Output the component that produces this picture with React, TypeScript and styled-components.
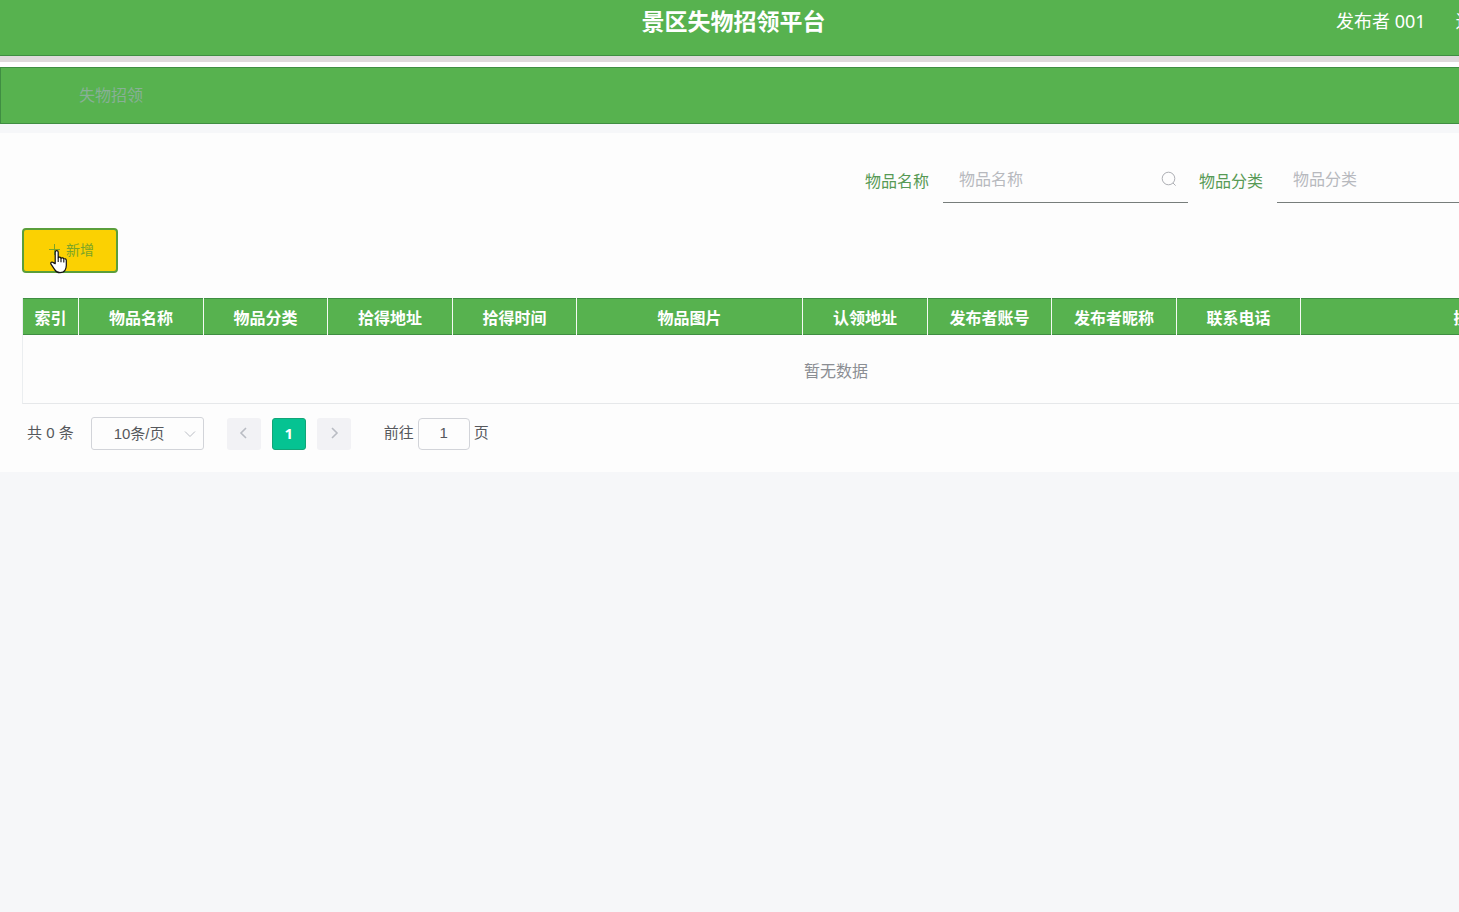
import React from "react";
import styled, { createGlobalStyle } from "styled-components";

const GREEN = "#57b24f";
const GREEN_EDGE = "#3f8e42";

const GlobalStyle = createGlobalStyle`
  *, *::before, *::after { box-sizing: border-box; }
  body {
    margin: 0;
    min-height: 100vh;
    background: #f6f7f9;
    font-family: "Noto Sans", "Noto Sans CJK SC", sans-serif;
    overflow-x: hidden;
  }
  button, input, select { font: inherit; margin: 0; }
`;

/* The page is wider than the window; the part to the right is cut off. */
const Viewport = styled.div`
  overflow: hidden;
`;

const Page = styled.div`
  width: calc(100% + 212px);
`;

const Header = styled.header`
  display: grid;
  grid-template-columns: 1fr auto 1fr;
  align-items: center;
  height: 62px;
  padding: 0 204px 14px 0;
  background: ${GREEN};
  border-bottom: 6px solid #dfdadc;
  box-shadow: inset 0 -1px 0 ${GREEN_EDGE};
  color: #fff;
`;

const Title = styled.h1`
  grid-column: 2;
  margin: 0;
  font-size: 23px;
  line-height: 42px;
  font-weight: 700;
`;

const UserBar = styled.div`
  display: flex;
  justify-content: flex-start;
  gap: 30px;
  width: 131px;
  justify-self: end;
  white-space: nowrap;
  font-size: 18px;
  line-height: 42px;
`;

const PlainLink = styled.a`
  color: inherit;
  text-decoration: none;
`;

const NavBar = styled.nav`
  display: flex;
  align-items: center;
  height: 57px;
  margin-top: 5px;
  padding: 0 0 3px 78px;
  background: ${GREEN};
  border: 1px solid ${GREEN_EDGE};
  font-size: 16px;
  color: #88b096;
`;

const Top = styled.div`
  background: #fff;
`;

const Panel = styled.main`
  margin-top: 9px;
  padding: 24px 22px 22px;
  background: #fdfdfd;
`;

const SearchForm = styled.form`
  display: flex;
  justify-content: flex-end;
  gap: 11px;
  padding-right: 127px;
`;

const Field = styled.div`
  display: flex;
  gap: 14px;
`;

const FieldLabel = styled.label`
  height: 46px;
  font-size: 16px;
  line-height: 48px;
  color: #579a55;
`;

const InputWrap = styled.div`
  display: flex;
  align-items: center;
  width: 245px;
  height: 46px;
  padding: 0 11px 2px 16px;
  border-bottom: 1px solid #777d7b;
`;

const TextInput = styled.input`
  flex: 1;
  min-width: 0;
  padding: 0;
  border: 0;
  outline: 0;
  background: transparent;
  font-size: 16px;
  line-height: 24px;
  color: #606266;
  &::placeholder { color: #b7b9be; opacity: 1; }
`;

const Actions = styled.div`
  display: flex;
  position: relative;
  margin: 25px 0;
`;

const AddButton = styled.button`
  display: flex;
  align-items: center;
  justify-content: center;
  gap: 6px;
  width: 96px;
  height: 45px;
  padding: 0 0 4px 2px;
  border: 2px solid #5a9e3a;
  border-radius: 4px;
  background: #fbd102;
  font-size: 14px;
  color: #7ba427;
  cursor: pointer;
`;

const Pointer = styled.svg`
  position: absolute;
  left: 27px;
  top: 21px;
`;

const DataTable = styled.table`
  width: 100%;
  table-layout: fixed;
  border-collapse: separate;
  border-spacing: 0;
  border-left: 1px solid #ebeef0;
  border-bottom: 1px solid #e6e8ea;
  font-size: 16px;
`;

const HeadCell = styled.th`
  height: 37px;
  padding: 3px 0 0;
  background: ${GREEN};
  border-right: 1px solid #f4faf3;
  box-shadow: inset 0 1px 0 ${GREEN_EDGE}, inset 0 -1px 0 ${GREEN_EDGE};
  line-height: 24px;
  color: #fff;
  white-space: nowrap;
  &:last-child { padding-right: 10px; }
`;

const EmptyCell = styled.td`
  height: 68px;
  padding: 2px 0 0;
  text-align: center;
  color: #8b8e93;
`;

const Pagination = styled.div`
  display: flex;
  align-items: center;
  height: 33px;
  margin-top: 13px;
  padding-left: 5px;
  font-family: "Liberation Sans", "Noto Sans CJK SC", sans-serif;
  font-size: 15px;
  line-height: 20px;
  color: #56585c;
`;

const Total = styled.span`
  padding-bottom: 2px;
`;

const SelectWrap = styled.div`
  display: flex;
  position: relative;
  width: 113px;
  margin: 0 23px 0 17px;
`;

const SizeSelect = styled.select`
  width: 100%;
  height: 33px;
  padding: 0 22px;
  appearance: none;
  border: 1px solid #d2d4d9;
  border-radius: 3px;
  background: #fdfdfd;
  color: inherit;
`;

const SelectArrow = styled.svg`
  position: absolute;
  right: 8px;
  top: 11px;
  pointer-events: none;
`;

const Pager = styled.div`
  display: flex;
  gap: 11px;
  margin-right: 33px;
`;

const PageButton = styled.button<{ $active?: boolean }>`
  display: flex;
  align-items: center;
  justify-content: center;
  width: 34px;
  height: 32px;
  padding: 0 0 2px;
  border: ${(p) => (p.$active ? "1px solid #12a577" : "0")};
  border-radius: 3px;
  background: ${(p) => (p.$active ? "#05c392" : "#f2f2f5")};
  font-family: "Noto Sans", sans-serif;
  font-weight: 700;
  color: ${(p) => (p.$active ? "#fff" : "#b9bcc3")};
`;

const Jump = styled.label`
  display: flex;
  align-items: center;
  gap: 4px;
`;

const JumpInput = styled.input`
  width: 52px;
  height: 32px;
  padding: 0 0 2px;
  border: 1px solid #d2d4d9;
  border-radius: 4px;
  background: #fdfdfd;
  text-align: center;
  color: inherit;
`;

const columns: { name: string; width?: number }[] = [
  { name: "索引", width: 56 },
  { name: "物品名称", width: 125 },
  { name: "物品分类", width: 124 },
  { name: "拾得地址", width: 125 },
  { name: "拾得时间", width: 124 },
  { name: "物品图片", width: 226 },
  { name: "认领地址", width: 125 },
  { name: "发布者账号", width: 124 },
  { name: "发布者昵称", width: 125 },
  { name: "联系电话", width: 124 },
  { name: "操作" },
];

function Chevron({ d }: { d: string }) {
  return (
    <svg width="12" height="12" viewBox="0 0 12 12" fill="none" stroke="currentColor" strokeWidth="1.6" aria-hidden>
      <path d={d} />
    </svg>
  );
}

export default function App() {
  return (
    <Viewport>
      <GlobalStyle />
      <Page>
        <Top>
          <Header>
            <Title>景区失物招领平台</Title>
            <UserBar>
              <span>发布者 001</span>
              <PlainLink href="#logout">退出</PlainLink>
            </UserBar>
          </Header>
          <NavBar>
            <PlainLink href="#lost">失物招领</PlainLink>
          </NavBar>
        </Top>

        <Panel>
          <SearchForm>
            <Field>
              <FieldLabel htmlFor="name">物品名称</FieldLabel>
              <InputWrap>
                <TextInput id="name" placeholder="物品名称" />
                <svg width="16" height="16" viewBox="0 0 16 16" fill="none" stroke="#adafb4" aria-hidden>
                  <circle cx="7.5" cy="7.5" r="6.3" />
                  <path d="M12 12l2.6 2.6" />
                </svg>
              </InputWrap>
            </Field>
            <Field>
              <FieldLabel htmlFor="category">物品分类</FieldLabel>
              <InputWrap>
                <TextInput id="category" placeholder="物品分类" />
              </InputWrap>
            </Field>
          </SearchForm>

          <Actions>
            <AddButton type="button">
              <svg width="12" height="12" viewBox="0 0 12 12" stroke="currentColor" aria-hidden>
                <path d="M6.5 1v11M1 6.5h11" />
              </svg>
              新增
            </AddButton>
            <Pointer width="20" height="25" viewBox="0 0 20 25" aria-hidden>
              <path
                d="M6.2 14.6V3.2c0-2.2 3-2.2 3 0v5.6c.5-1 2.7-.8 2.8.6.7-.9 2.6-.6 2.8.7.8-.7 2.5-.3 2.5 1.3v5.2c0 2.3-.6 3.4-1.3 4.7-.9 1.7-2.7 2.4-5 2.4-2.8 0-4.2-1-5.3-3.1L2 15.2c-.9-1.7 1-2.9 2.3-1.6z"
                fill="#fff"
                stroke="#111"
                strokeWidth="1.2"
                strokeLinejoin="round"
              />
              <path d="M9.2 8.8v4.2M12 9.6v3.6M14.8 10.4v3" stroke="#111" strokeWidth="1.1" />
            </Pointer>
          </Actions>

          <DataTable>
            <colgroup>
              {columns.map((c) => (
                <col key={c.name} width={c.width} />
              ))}
            </colgroup>
            <thead>
              <tr>
                {columns.map((c) => (
                  <HeadCell key={c.name} scope="col">{c.name}</HeadCell>
                ))}
              </tr>
            </thead>
            <tbody>
              <tr>
                <EmptyCell colSpan={columns.length}>暂无数据</EmptyCell>
              </tr>
            </tbody>
          </DataTable>

          <Pagination>
            <Total>共 0 条</Total>
            <SelectWrap>
              <SizeSelect aria-label="每页条数">
                <option>10条/页</option>
              </SizeSelect>
              <SelectArrow width="12" height="12" viewBox="0 0 12 12" fill="none" stroke="#babdc4">
                <path d="M1 3.5l5 5 5-5" />
              </SelectArrow>
            </SelectWrap>
            <Pager>
              <PageButton type="button" aria-label="上一页"><Chevron d="M8 1L3 6l5 5" /></PageButton>
              <PageButton type="button" $active>1</PageButton>
              <PageButton type="button" aria-label="下一页"><Chevron d="M4 1l5 5-5 5" /></PageButton>
            </Pager>
            <Jump>
              <Total>前往</Total>
              <JumpInput defaultValue="1" />
              <Total>页</Total>
            </Jump>
          </Pagination>
        </Panel>
      </Page>
    </Viewport>
  );
}
